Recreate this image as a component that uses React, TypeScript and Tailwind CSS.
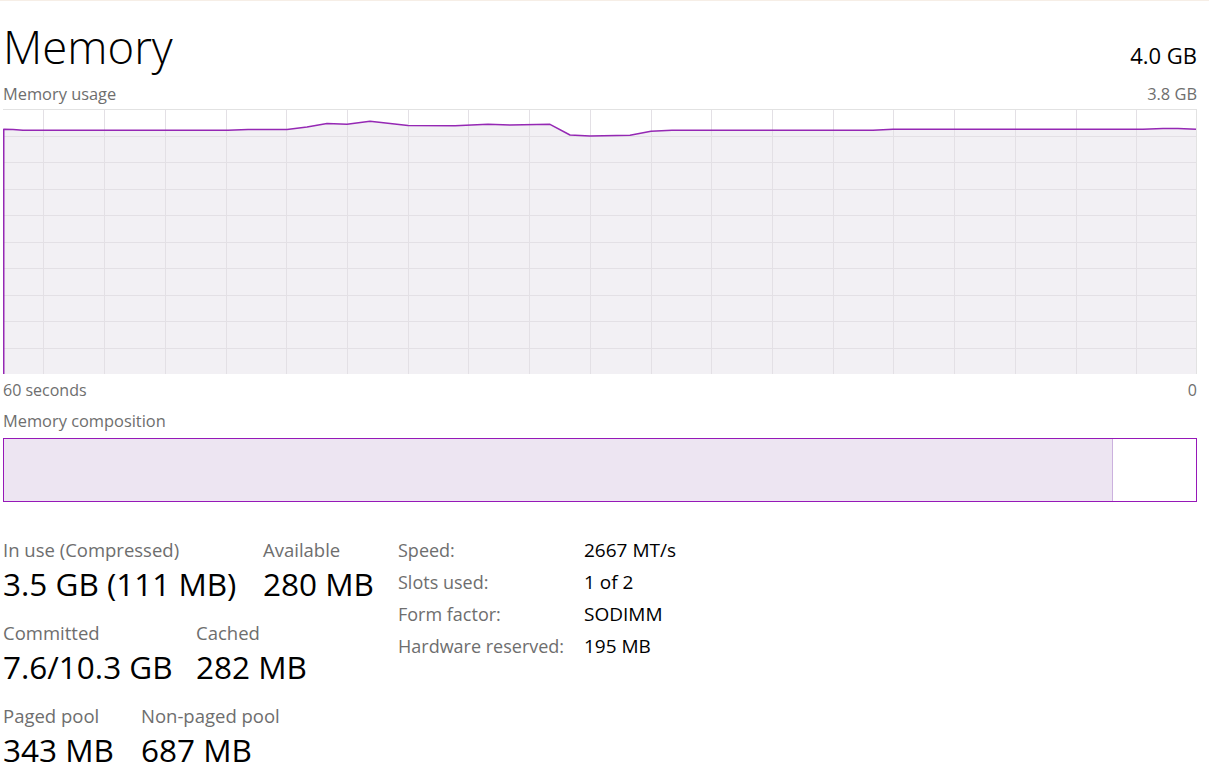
const GRID_X = [40, 101, 162, 223, 283, 344, 405, 465, 526, 587, 648, 708, 769, 830, 890, 951, 1012, 1073, 1133]
const GRID_Y = [27, 53, 80, 106, 133, 159, 186, 212, 239]

// usage samples, chart coords (0..1194 x 0..265)
const USAGE: [number, number][] = [
  [0.75, 20.3], [10, 20.5], [20, 21.3], [225, 21.3], [245, 20.6], [284, 20.5], [304, 18],
  [324, 14.6], [344, 15.3], [367, 12.3], [405, 16.5], [452, 16.8], [485, 15.3], [507, 16],
  [547, 15.3], [567, 26], [587, 27], [627, 26.3], [648, 22.3], [669, 21.3], [870, 21.3],
  [890, 20.3], [1140, 20.3], [1160, 19.5], [1175, 19.5], [1193, 20.3],
]

const STAT_ROWS = [
  { first: { label: 'In use (Compressed)', value: '3.5 GB (111 MB)' }, second: { label: 'Available', value: '280 MB' }, w: 'w-[260px]' },
  { first: { label: 'Committed', value: '7.6/10.3 GB' }, second: { label: 'Cached', value: '282 MB' }, w: 'w-[193px]' },
  { first: { label: 'Paged pool', value: '343 MB' }, second: { label: 'Non-paged pool', value: '687 MB' }, w: 'w-[138px]' },
]

const DETAILS = [
  ['Speed:', '2667 MT/s'],
  ['Slots used:', '1 of 2'],
  ['Form factor:', 'SODIMM'],
  ['Hardware reserved:', '195 MB'],
]

function UsageChart() {
  const line = USAGE.map(([x, y]) => `${x},${y}`).join(' ')
  const area = `0,265 ${line} 1194,265`
  return (
    <svg width={1194} height={265} className="block">
      <polygon points={area} fill="#f2f0f4" />
      {GRID_X.map((x) => (
        <line key={x} x1={x + 0.5} y1={0} x2={x + 0.5} y2={265} stroke="#e3e0e5" strokeWidth={1} />
      ))}
      {GRID_Y.map((y) => (
        <line key={y} x1={0} y1={y + 0.5} x2={1193} y2={y + 0.5} stroke="#e3e0e5" strokeWidth={1} />
      ))}
      <line x1={0} y1={0.5} x2={1194} y2={0.5} stroke="#e2e2e2" />
      <line x1={1193.5} y1={0} x2={1193.5} y2={265} stroke="#e2e2e2" />
      <polyline
        points={`0.75,265 ${line}`}
        fill="none"
        stroke="#9528b4"
        strokeWidth={1.5}
        strokeLinejoin="round"
      />
    </svg>
  )
}

function Stat({ label, value }: { label: string; value: string }) {
  return (
    <div>
      <p className="text-[18.5px] leading-[26px] text-[#6e6e6e] whitespace-nowrap">{label}</p>
      <p className="text-[31.5px] leading-[42px] text-black whitespace-nowrap">{value}</p>
    </div>
  )
}

export default function App() {
  return (
    <div className="min-h-screen w-[1209px] bg-white border-t border-[#f6eee6] pl-[3px] pr-[12px] font-['Open_Sans',sans-serif]">
      {/* header */}
      <div className="pt-[19px] flex items-baseline justify-between">
        <h1 className="text-[45.5px] leading-[52px] font-light text-black">Memory</h1>
        <span className="text-[22px] text-black">4.0 GB</span>
      </div>
      <div className="mt-[12px] flex justify-between text-[16.4px] leading-[20px] text-[#6e6e6e]">
        <span>Memory usage</span>
        <span>3.8 GB</span>
      </div>

      <div className="mt-[5px]">
        <UsageChart />
      </div>
      <div className="mt-[6px] flex justify-between text-[16px] leading-[20px] text-[#6e6e6e]">
        <span>60 seconds</span>
        <span>0</span>
      </div>

      {/* composition */}
      <p className="mt-[11px] text-[16.4px] leading-[20px] text-[#6e6e6e]">Memory composition</p>
      <div className="mt-[7px] h-[64px] border border-[#9618b8] flex">
        <div className="w-[1109px] h-full bg-[#ede5f2] border-r border-[#cbb1de]" />
        <div className="flex-1 bg-white" />
      </div>

      {/* stats */}
      <div className="mt-[32px] flex items-start">
        <div className="w-[395px] pt-[3px] flex flex-col gap-[15px]">
          {STAT_ROWS.map((row) => (
            <div key={row.first.label} className="flex">
              <div className={row.w}>
                <Stat {...row.first} />
              </div>
              <Stat {...row.second} />
            </div>
          ))}
        </div>
        <div className="grid grid-cols-[186px_auto] leading-[32px]">
          {DETAILS.map(([k, v]) => (
            <div key={k} className="contents">
              <span className="text-[18px] text-[#6e6e6e]">{k}</span>
              <span className="text-[19px] text-black">{v}</span>
            </div>
          ))}
        </div>
      </div>
    </div>
  )
}
